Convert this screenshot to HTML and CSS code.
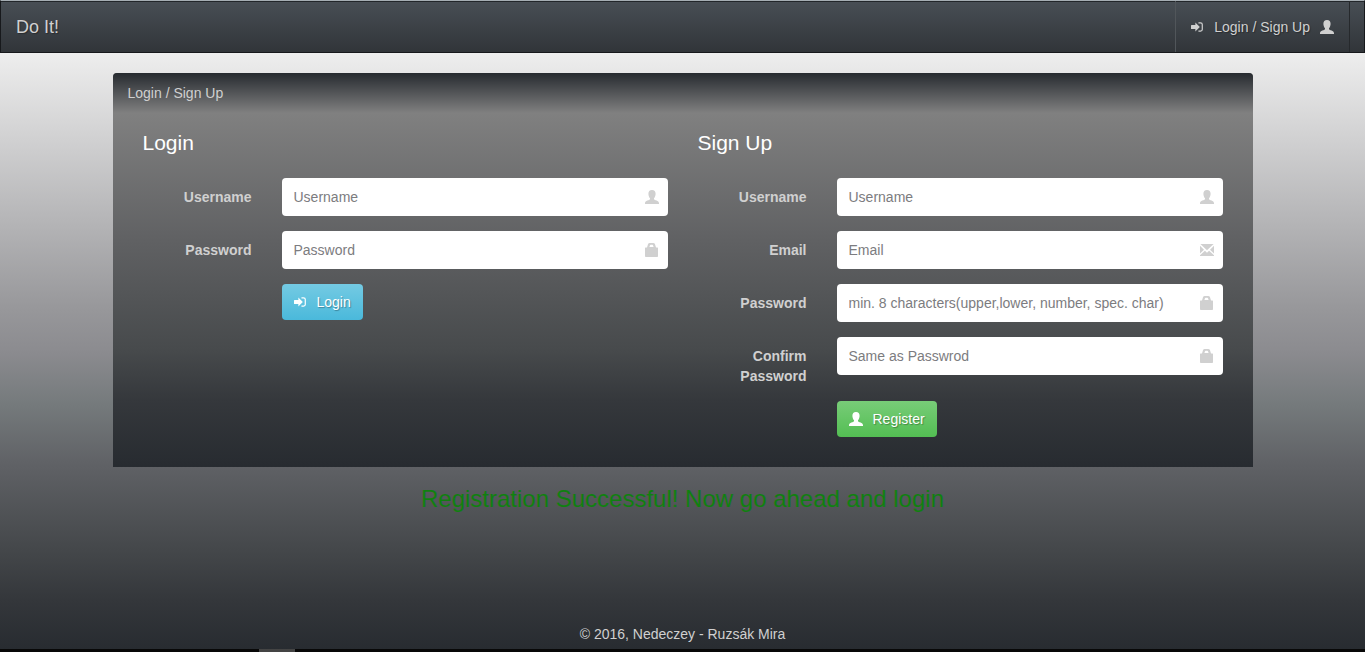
FILE: index.html
```html
<!DOCTYPE html>
<html lang="en">
<head>
<meta charset="utf-8">
<meta name="viewport" content="width=device-width, initial-scale=1">
<title>Do It!</title>
<link rel="stylesheet" href="styles.css">
</head>
<body>
<svg class="sprite" aria-hidden="true">
  <symbol id="user" viewBox="0 0 14 14"><path d="M7 0C4.500 0 3.400 1.500 3.400 3.700C3.400 5.500 4.100 7.200 5 8.200V9.300C4.600 10.300 0 10.600 0 13.200V14H14V13.200C14 10.600 9.400 10.300 9 9.300V8.200C9.900 7.200 10.600 5.500 10.600 3.700C10.600 1.500 9.500 0 7 0Z"/></symbol>
  <symbol id="bag" viewBox="0 0 14 14"><path fill-rule="evenodd" d="M0 5Q0 4.500 .5 4.500H2L3 1.300Q3.400 0 4.800 0H8.200Q9.600 0 10 1.300L11 4.500H12.500Q13 4.500 13 5V13.200Q13 14 12.200 14H.8Q0 14 0 13.200ZM4.400 4H8.600L8 2.300Q7.800 1.800 7.300 1.800H5.700Q5.200 1.800 5 2.300Z"/></symbol>
  <symbol id="mail" viewBox="0 0 14 14"><path d="M.4 1H13.600L7 7.200ZM0 2.800L4 6.700L0 10.600ZM14 2.800V10.600L10 6.700ZM0 13V12.300L4.900 7.700L7 9.700L9.100 7.700L14 12.300V13Z"/></symbol>
  <symbol id="enter" viewBox="0 0 14 14"><path d="M9.500 7L4.700 11.800V9.200H.6Q0 9.200 0 8.600V5.400Q0 4.800 .6 4.800H4.700V2.200Z"/><path d="M8 2H10.300Q12.800 2 12.800 4.200V9.800Q12.800 12 10.300 12H8V10.800H10.200Q11.500 10.800 11.500 9.800V4.200Q11.500 3.200 10.200 3.200H8Z"/></symbol>
</svg>

<header class="navbar">
  <a class="brand" href="#">Do It!</a>
  <nav class="nav">
    <a class="nav-link" href="#"><svg class="icon arrow"><use href="#enter"/></svg>Login / Sign Up<svg class="icon"><use href="#user"/></svg></a>
  </nav>
</header>

<main class="container">
  <section class="panel">
    <div class="panel-heading">Login / Sign Up</div>
    <div class="panel-body">
      <form class="form">
        <h2 class="title">Login</h2>
        <div class="row">
          <label class="label" for="login-user">Username</label>
          <div class="field"><input class="input" id="login-user" type="text" placeholder="Username"><svg class="icon feedback"><use href="#user"/></svg></div>
        </div>
        <div class="row">
          <label class="label" for="login-pass">Password</label>
          <div class="field"><input class="input" id="login-pass" type="password" placeholder="Password"><svg class="icon feedback"><use href="#bag"/></svg></div>
        </div>
        <div class="row actions">
          <button class="btn btn-info" type="submit"><svg class="icon arrow"><use href="#enter"/></svg>Login</button>
        </div>
      </form>
      <form class="form">
        <h2 class="title">Sign Up</h2>
        <div class="row">
          <label class="label" for="new-user">Username</label>
          <div class="field"><input class="input" id="new-user" type="text" placeholder="Username"><svg class="icon feedback"><use href="#user"/></svg></div>
        </div>
        <div class="row">
          <label class="label" for="new-email">Email</label>
          <div class="field"><input class="input" id="new-email" type="email" placeholder="Email"><svg class="icon feedback"><use href="#mail"/></svg></div>
        </div>
        <div class="row">
          <label class="label" for="new-pass">Password</label>
          <div class="field"><input class="input" id="new-pass" type="password" placeholder="min. 8 characters(upper,lower, number, spec. char)"><svg class="icon feedback"><use href="#bag"/></svg></div>
        </div>
        <div class="row">
          <label class="label" for="new-confirm">Confirm Password</label>
          <div class="field"><input class="input" id="new-confirm" type="password" placeholder="Same as Passwrod"><svg class="icon feedback"><use href="#bag"/></svg></div>
        </div>
        <div class="row actions">
          <button class="btn btn-success" type="submit"><svg class="icon"><use href="#user"/></svg>Register</button>
        </div>
      </form>
    </div>
  </section>
  <p class="message" role="status">Registration Successful! Now go ahead and login</p>
</main>

<footer class="footer">© 2016, Nedeczey - Ruzsák Mira</footer>
<div class="taskbar"><span class="task"></span></div>
</body>
</html>
```
FILE: styles.css
```css
* { box-sizing: border-box; }

body {
  margin: 0;
  min-height: 100vh;
  display: flex;
  flex-direction: column;
  font: 14px/20px "Liberation Sans", Arial, sans-serif;
  color: #d0d0d0;
  background: linear-gradient(#f8f8f8 0%, #eeeeee 8%, #98989b 47%, #8b8b8f 54%, #757a7c 62%, #606266 71%, #45484b 84%, #34373b 92%, #272b30 100%);
}

.sprite { position: absolute; width: 0; height: 0; }
.icon { width: 14px; height: 14px; flex: none; fill: currentColor; }
.arrow { width: 13px; }

.navbar {
  display: flex;
  justify-content: space-between;
  height: 53px;
  padding: 0 14px 0 0;
  border: 1px solid #17191c;
  border-top: 1px solid #a5adb3;
  box-shadow: inset 0 1px #22262a;
  background: linear-gradient(#484e55, #3a3f44 60%, #313539);
  text-shadow: 1px 1px 1px rgba(0, 0, 0, .3);
}
.brand {
  padding: 16px 15px;
  font-size: 18px;
  color: inherit;
  text-decoration: none;
}
.nav { display: flex; }
.nav-link {
  display: flex;
  align-items: center;
  gap: 10px;
  padding: 0 15px;
  border-left: 1px solid #51565a;
  border-right: 1px solid #26292c;
  color: inherit;
  text-decoration: none;
}

.container {
  width: 100%;
  max-width: 1170px;
  margin: 0 auto;
  padding: 20px 15px 0;
  flex: 1;
}
.panel {
  border-radius: 4px 4px 0 0;
  background: #808080;
}
.panel-heading {
  padding: 10px 15px;
  border-radius: 4px 4px 0 0;
  background: linear-gradient(#272b30, #808080);
}
.panel-body {
  display: grid;
  grid-template-columns: 1fr 1fr;
  gap: 30px;
  padding: 15px 30px 30px;
  background: linear-gradient(#808080, #606163 36%, #474a4c 67%, #35383c 81%, #272b30);
}
.title {
  margin: 0 0 20px;
  font-size: 21px;
  font-weight: 400;
  line-height: 30px;
  color: #fff;
}
.row {
  display: grid;
  grid-template-columns: 109px 1fr;
  gap: 30px;
  margin-bottom: 15px;
}
.label {
  padding-top: 9px;
  font-weight: 700;
  text-align: right;
}
.field { position: relative; }
.input {
  display: block;
  width: 100%;
  height: 38px;
  padding: 8px 42px 8px 12px;
  border: 0;
  border-radius: 4px;
  background: #fff;
  color: #272b30;
  font: inherit;
}
.input::placeholder { color: #7c7c80; opacity: 1; }
.feedback {
  position: absolute;
  top: 12px;
  right: 9px;
  color: #d0d0d0;
}
.actions { margin-bottom: 0; }
.btn {
  grid-column: 2;
  justify-self: start;
  display: flex;
  align-items: center;
  gap: 10px;
  height: 36px;
  padding: 0 12px;
  border: 0;
  border-radius: 4px;
  color: #fff;
  font: inherit;
  text-shadow: 1px 1px 1px rgba(0, 0, 0, .3);
}
.btn-info { background: linear-gradient(#74cae3, #5bc0de 60%, #4ab9db); }
.btn-success { background: linear-gradient(#78cc78, #62c462 60%, #53be53); }

.message {
  margin: 17px 0 0;
  font-size: 24px;
  line-height: 30px;
  text-align: center;
  color: #108010;
}
.footer { padding: 5px 15px; text-align: center; }
.taskbar { height: 3px; padding-left: 259px; background: #080808; }
.task { display: block; width: 36px; height: 3px; background: #444; }
```
